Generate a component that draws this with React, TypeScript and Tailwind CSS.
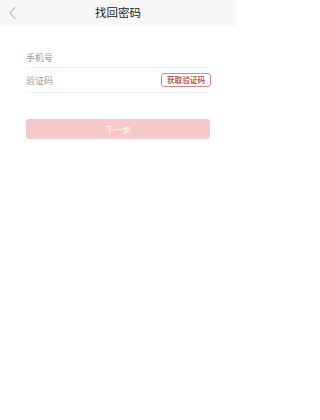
import React from "react";

export default function App() {
  const font = { fontFamily: '"Noto Sans CJK SC", "Noto Sans", sans-serif' };
  return (
    <div className="w-[236px] h-[420px] bg-white flex flex-col" style={font}>
      <div className="h-[26px] bg-[#f7f7f7] flex items-center relative">
        <div className="absolute left-[8px] top-[6px]">
          <svg width="9" height="14" viewBox="0 0 9 14" fill="none">
            <path d="M7 1.5 L2 7 L7 12.5" stroke="#c4c4c4" strokeWidth="1.2" strokeLinecap="round" strokeLinejoin="round" />
          </svg>
        </div>
        <div className="flex-1 text-center text-[11.5px] leading-none text-[#222]">找回密码</div>
      </div>
      <div className="px-[26px] pt-[21px] flex flex-col">
        <div className="h-[21px] flex items-center border-b border-[#f2f2f2]">
          <span className="text-[9px] text-[#9a9a9a] leading-none">手机号</span>
        </div>
        <div className="h-[25px] flex items-center justify-between border-b border-[#f2f2f2]">
          <span className="text-[9px] text-[#9a9a9a] leading-none">验证码</span>
          <div className="w-[50px] h-[14px] -mr-[1px] border border-[#d4868c] rounded-[3px] flex items-center justify-center text-[7.6px] font-medium leading-none text-[#b03a44]">
            获取验证码
          </div>
        </div>
        <div className="mt-[26px] h-[20px] rounded-[3px] bg-[#f5c9cb] flex items-center justify-center text-[8.5px] leading-none text-white">
          下一步
        </div>
      </div>
    </div>
  );
}
